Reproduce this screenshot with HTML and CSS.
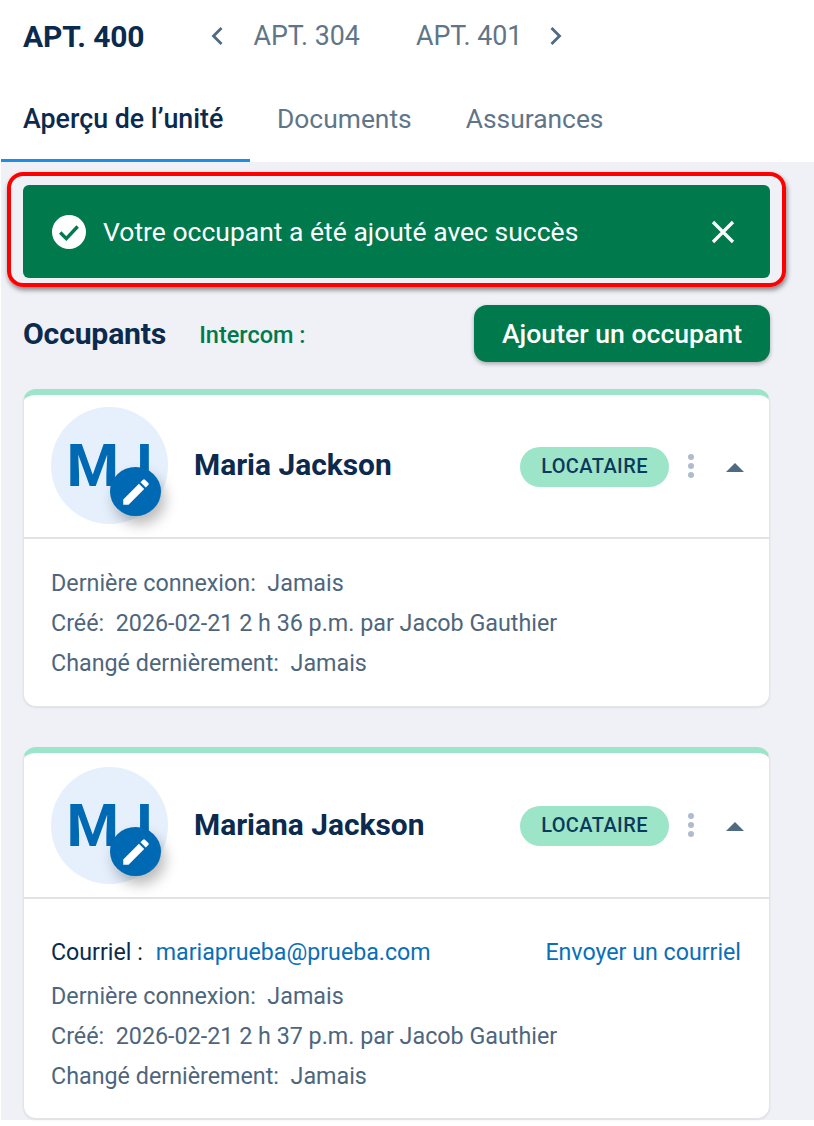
FILE: index.html
```html
<!DOCTYPE html>
<html lang="fr">
<head>
<meta charset="utf-8">
<title>APT. 400</title>
<link rel="stylesheet" href="styles.css">
</head>
<body>
<header class="head">
  <div class="aptbar">
    <h1 class="apt-current">APT. 400</h1>
    <svg class="chev chev-left" viewBox="0 0 14 20"><path d="M11.5 2 3.5 10l8 8"/></svg>
    <span class="apt-link apt-prev">APT. 304</span>
    <span class="apt-link apt-next">APT. 401</span>
    <svg class="chev chev-right" viewBox="0 0 14 20"><path d="m2.5 2 8 8-8 8"/></svg>
  </div>
  <nav class="tabs">
    <span class="tab tab-active">Aperçu de l’unité</span>
    <span class="tab tab-docs">Documents</span>
    <span class="tab">Assurances</span>
  </nav>
</header>
<main class="content">
  <div class="highlight-wrap">
    <div class="alert">
      <svg class="alert-check" viewBox="0 0 24 24"><circle cx="12" cy="12" r="12" fill="#fff"/><path d="m5.8 12.4 4.3 4.3 8-8.6" fill="none" stroke="#007a4d" stroke-width="2.4"/></svg>
      <span class="alert-text">Votre occupant a été ajouté avec succès</span>
      <svg class="alert-close" viewBox="0 0 24 24"><path d="M2 2 22 22M22 2 2 22" stroke="#fff" stroke-width="3.2" fill="none"/></svg>
    </div>
    <div class="highlight"></div>
  </div>
  <div class="section-head">
    <h2 class="section-title">Occupants</h2>
    <span class="intercom">Intercom :</span>
    <button class="add-btn">Ajouter un occupant</button>
  </div>

  <article class="card card-first">
    <div class="card-head">
      <div class="avatar"><span class="initials">MJ</span>
        <span class="edit"><svg viewBox="0 0 24 24"><path d="M3 17.25V21h3.75L17.81 9.94l-3.75-3.75L3 17.25zM20.71 7.04a1 1 0 0 0 0-1.41l-2.34-2.34a1 1 0 0 0-1.41 0l-1.83 1.83 3.75 3.75 1.83-1.83z" fill="#fff"/></svg></span>
      </div>
      <span class="name">Maria Jackson</span>
      <span class="badge">LOCATAIRE</span>
      <span class="dots"><i></i><i></i><i></i></span>
      <span class="caret"></span>
    </div>
    <div class="card-body">
      <p class="line">Dernière connexion:&nbsp; Jamais</p>
      <p class="line">Créé:&nbsp; 2026-02-21 2 h 36 p.m. par Jacob Gauthier</p>
      <p class="line">Changé dernièrement:&nbsp; Jamais</p>
    </div>
  </article>

  <article class="card card-second">
    <div class="card-head">
      <div class="avatar"><span class="initials">MJ</span>
        <span class="edit"><svg viewBox="0 0 24 24"><path d="M3 17.25V21h3.75L17.81 9.94l-3.75-3.75L3 17.25zM20.71 7.04a1 1 0 0 0 0-1.41l-2.34-2.34a1 1 0 0 0-1.41 0l-1.83 1.83 3.75 3.75 1.83-1.83z" fill="#fff"/></svg></span>
      </div>
      <span class="name">Mariana Jackson</span>
      <span class="badge">LOCATAIRE</span>
      <span class="dots"><i></i><i></i><i></i></span>
      <span class="caret"></span>
    </div>
    <div class="card-body card-body-mail">
      <div class="mail-row">
        <span class="mail-label">Courriel :</span>
        <a class="link mail-value">mariaprueba@prueba.com</a>
        <a class="link mail-send">Envoyer un courriel</a>
      </div>
      <p class="line">Dernière connexion:&nbsp; Jamais</p>
      <p class="line">Créé:&nbsp; 2026-02-21 2 h 37 p.m. par Jacob Gauthier</p>
      <p class="line">Changé dernièrement:&nbsp; Jamais</p>
    </div>
  </article>
</main>
</body>
</html>
```
FILE: styles.css
```css
* { box-sizing: border-box; }
html, body { margin: 0; padding: 0; background: #fff; }
body { width: 814px; height: 1126px; overflow: hidden; font-family: Roboto, "Liberation Sans", sans-serif; color: #0b2a4e; }

.head { height: 162px; padding-left: 1px; }
.aptbar { display: flex; align-items: center; height: 72px; padding-left: 22px; }
.apt-current { margin: 0 66px 0 0; font-size: 30px; font-weight: 700; color: #0b2a4e; letter-spacing: -.1px; }
.chev { width: 14px; height: 20px; fill: none; stroke: #4f6b82; stroke-width: 2.8; }
.chev-left { margin-right: 29px; }
.chev-right { margin-left: 27px; }
.apt-link { font-size: 26.8px; color: #5f7688; font-weight: 400; }
.apt-prev { margin-right: 56px; }

.tabs { display: flex; height: 90px; }
.tab { font-size: 26.4px; color: #5f7688; height: 90px; padding: 32px 27px 0 27px; line-height: 30px; }
.tab-active { padding-left: 22px; padding-right: 0; font-size: 26.8px; color: #0b2a4e; font-weight: 500; border-bottom: 3px solid #1d8ee6; width: 249px; white-space: nowrap; }

.content { margin-left: 1px; height: 958px; background: #eff1f6; padding: 23px 44px 0 22px; }

.highlight-wrap { position: relative; }
.alert { display: flex; align-items: center; height: 93px; background: #007a4d; border-radius: 6px; padding: 0 35px 0 29px; }
.alert-check { width: 34px; height: 34px; margin-right: 17px; flex: none; }
.alert-text { flex: 1; color: #fff; font-size: 26.5px; }
.alert-close { width: 24px; height: 24px; flex: none; }
.highlight { position: absolute; left: -16px; top: -13px; width: 779px; height: 115px; border: 4px solid #f00; border-radius: 16px; box-shadow: 1px 3px 5px rgba(0,0,0,.45); pointer-events: none; }

.section-head { display: flex; align-items: center; height: 57px; margin-top: 27px; }
.section-title { margin: 0 33px 0 0; font-size: 30.2px; font-weight: 700; color: #0b2a4e; letter-spacing: -.2px; }
.intercom { margin-top: 3px; font-size: 23.5px; font-weight: 500; color: #007a4d; }
.add-btn { margin-left: auto; width: 296px; height: 57px; border: 0; border-radius: 13px; background: #007a4d; color: #fff; font: 500 26.6px Roboto, sans-serif; box-shadow: 0 2px 4px rgba(0,0,0,.3); }

.card { background: #fff; border: 1px solid #e3e4e8; border-top: 6px solid #9ce5c8; border-radius: 13px; box-shadow: 0 1px 2px rgba(0,0,0,.08); }
.card-first { margin-top: 27px; height: 318px; }
.card-second { margin-top: 40px; height: 372px; }
.card-head { display: flex; align-items: center; height: 144px; padding: 0 25px 0 27px; border-bottom: 2px solid #e2e2e5; }
.card-second .card-head { height: 146px; padding-top: 2px; }
.avatar { position: relative; width: 117px; height: 117px; margin-top: -1px; border-radius: 50%; background: #e5f0fc; flex: none; text-align: center; }
.initials { display: block; font-size: 60px; font-weight: 700; line-height: 117px; color: #0069b4; }
.edit { position: absolute; left: 59px; top: 60px; width: 51px; height: 49px; border-radius: 50%; background: #0069b4; display: flex; align-items: center; justify-content: center; box-shadow: 4px 8px 14px rgba(0,0,0,.28); }
.edit svg { width: 34px; height: 34px; }
.name { margin: 0 0 3px 26px; font-size: 29.9px; font-weight: 700; color: #0b2a4e; flex: 1; }
.badge { width: 149px; height: 40px; margin-top: 2px; border-radius: 20px; background: #9ce5c8; color: #0b3a5c; font-size: 20px; font-weight: 500; letter-spacing: .4px; text-align: center; line-height: 38px; }
.card-second .badge { margin-top: 0; }
.dots { display: flex; flex-direction: column; gap: 3px; margin: 0 32px 0 19px; width: 6px; }
.card-second .dots { margin-bottom: 2px; }
.dots i { display: block; width: 6px; height: 6px; border-radius: 50%; background: #aebccb; }
.caret { width: 0; height: 0; margin: 3px 0 0; border-left: 9px solid transparent; border-right: 9px solid transparent; border-bottom: 9px solid #4f6b82; }
.card-second .caret { margin-top: 1px; }

.card-body { padding: 29px 28px 0 27px; }
.card-body-mail { padding-top: 38px; }
.line { margin: 0 0 10px; height: 30px; line-height: 30px; font-size: 23.3px; color: #4e667c; white-space: nowrap; }
.mail-row { display: flex; height: 30px; margin-bottom: 14px; line-height: 30px; font-size: 23.2px; }
.mail-label { color: #0b2a4e; margin-right: 13px; }
.link { color: #0a6fb8; }
.mail-send { margin-left: auto; }
```
